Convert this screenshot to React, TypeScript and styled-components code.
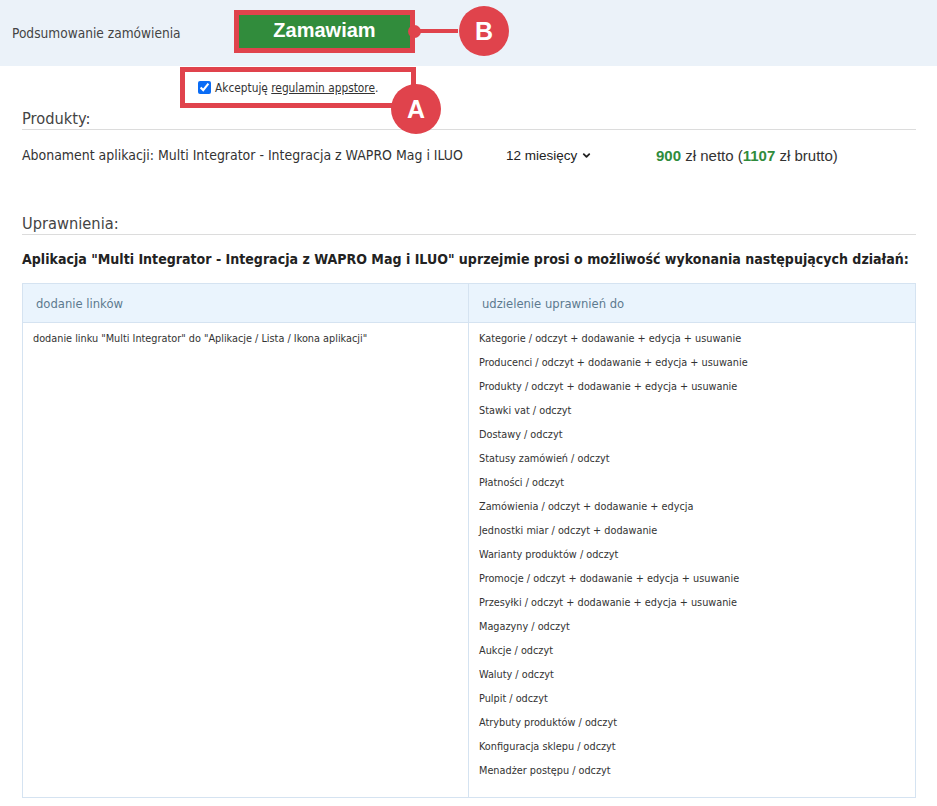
import React from "react";
import styled, { createGlobalStyle } from "styled-components";
import { ChevronDown } from "lucide-react";

const Global = createGlobalStyle`
  html, body { margin: 0; padding: 0; background: #fff; }
  body { font-family: "DejaVu Sans", Tahoma, sans-serif; color: #333; }
  * { box-sizing: border-box; }
`;

const RED = "#e0434c";
const COND = `"DejaVu Sans Condensed", "DejaVu Sans", sans-serif`;

const Page = styled.div`
  width: 937px;
  min-height: 806px;
  position: relative;
`;

const Header = styled.div`
  height: 66px;
  background: #ebf2f9;
  display: flex;
  align-items: center;
  padding-left: 12px;
`;

const HeaderTitle = styled.div`
  font-family: ${COND};
  font-size: 13.6px;
  color: #444;
  width: 222px;
  margin-top: -1px;
`;

const ButtonFrame = styled.div`
  position: relative;
  border: 5px solid ${RED};
  margin-top: -3px;
`;

const OrderButton = styled.button`
  width: 171px;
  height: 33px;
  border: none;
  background: #318c3c;
  color: #fff;
  font-family: "Liberation Sans", Arial, sans-serif;
  font-weight: bold;
  font-size: 20px;
  display: flex;
  align-items: center;
  justify-content: center;
  padding: 0 0 2px;
`;

const Dot = styled.span`
  position: absolute;
  width: 13px;
  height: 13px;
  border-radius: 50%;
  background: ${RED};
  right: -11px;
  top: 10px;
`;

const Connector = styled.span`
  position: absolute;
  height: 4px;
  width: 48px;
  background: ${RED};
  left: 100%;
  top: 14px;
`;

const Badge = styled.span<{ $x: number; $y: number }>`
  position: absolute;
  left: ${(p) => p.$x - 25}px;
  top: ${(p) => p.$y - 25}px;
  width: 50px;
  height: 50px;
  border-radius: 50%;
  background: ${RED};
  color: #fff;
  font-family: "Liberation Sans", Arial, sans-serif;
  font-weight: bold;
  font-size: 25px;
  display: flex;
  align-items: center;
  justify-content: center;
  z-index: 2;
`;

const AcceptRow = styled.div`
  padding-left: 180px;
  margin-top: 1px;
`;

const AcceptFrame = styled.label`
  width: 236px;
  height: 41px;
  border: 5px solid ${RED};
  display: flex;
  align-items: center;
  padding-left: 13px;
  gap: 4px;
  font-family: ${COND};
  font-size: 11.8px;
  color: #333;
  input {
    margin: 0;
    width: 13px;
    height: 13px;
    accent-color: #0a6cf5;
  }
  a {
    color: #333;
    text-decoration: underline;
  }
`;

const Content = styled.div`
  padding: 0 21px 0 22px;
`;

const SectionTitle = styled.div<{ $mt: number }>`
  font-family: ${COND};
  font-size: 16.3px;
  color: #444;
  padding-bottom: 1px;
  border-bottom: 1px solid #dcdcdc;
  margin-top: ${(p) => p.$mt}px;
`;

const ProductRow = styled.div`
  display: flex;
  align-items: center;
  height: 50px;
`;

const ProductName = styled.div`
  font-family: ${COND};
  font-size: 13.95px;
  color: #333;
  width: 484px;
`;

const Period = styled.div`
  font-family: "Liberation Sans", Arial, sans-serif;
  font-size: 13.5px;
  color: #222;
  width: 150px;
  display: flex;
  align-items: center;
  gap: 4px;
`;

const Price = styled.div`
  font-family: "Liberation Sans", Arial, sans-serif;
  font-size: 15px;
  color: #333;
  b { color: #2f8c3c; }
`;

const Lead = styled.div`
  font-family: ${COND};
  font-weight: bold;
  font-size: 14.05px;
  color: #222;
  margin-top: 16px;
  white-space: nowrap;
`;

const Table = styled.div`
  margin-top: 16px;
  border: 1px solid #d5e3f1;
  display: grid;
  grid-template-columns: 1fr 1fr;
`;

const HeadCell = styled.div<{ $last?: boolean }>`
  background: #eaf4fd;
  height: 39px;
  display: flex;
  align-items: center;
  padding-left: 13px;
  font-family: ${COND};
  font-size: 12.9px;
  color: #5d7a8f;
  border-bottom: 1px solid #d5e3f1;
  ${(p) => (p.$last ? "" : "border-right: 1px solid #d5e3f1;")}
`;

const BodyCell = styled.div<{ $last?: boolean }>`
  padding: 4px 10px 14px;
  font-family: ${COND};
  font-size: 10.8px;
  color: #333;
  line-height: 24px;
  ${(p) => (p.$last ? "" : "border-right: 1px solid #d5e3f1;")}
`;

const Line = styled.div``;

const perms = [
  "Kategorie / odczyt + dodawanie + edycja + usuwanie",
  "Producenci / odczyt + dodawanie + edycja + usuwanie",
  "Produkty / odczyt + dodawanie + edycja + usuwanie",
  "Stawki vat / odczyt",
  "Dostawy / odczyt",
  "Statusy zamówień / odczyt",
  "Płatności / odczyt",
  "Zamówienia / odczyt + dodawanie + edycja",
  "Jednostki miar / odczyt + dodawanie",
  "Warianty produktów / odczyt",
  "Promocje / odczyt + dodawanie + edycja + usuwanie",
  "Przesyłki / odczyt + dodawanie + edycja + usuwanie",
  "Magazyny / odczyt",
  "Aukcje / odczyt",
  "Waluty / odczyt",
  "Pulpit / odczyt",
  "Atrybuty produktów / odczyt",
  "Konfiguracja sklepu / odczyt",
  "Menadżer postępu / odczyt",
];

export default function App() {
  return (
    <Page>
      <Global />
      <Header>
        <HeaderTitle>Podsumowanie zamówienia</HeaderTitle>
        <ButtonFrame>
          <OrderButton>Zamawiam</OrderButton>
          <Dot />
          <Connector />
        </ButtonFrame>
      </Header>
      <Badge $x={484} $y={31}>B</Badge>
      <Badge $x={416} $y={109}>A</Badge>
      <AcceptRow>
        <AcceptFrame>
          <input type="checkbox" defaultChecked />
          <span>
            Akceptuję <a href="#">regulamin appstore</a>.
          </span>
        </AcceptFrame>
      </AcceptRow>
      <Content>
        <SectionTitle $mt={1}>Produkty:</SectionTitle>
        <ProductRow>
          <ProductName>Abonament aplikacji: Multi Integrator - Integracja z WAPRO Mag i ILUO</ProductName>
          <Period>
            12 miesięcy <ChevronDown size={11} strokeWidth={4} />
          </Period>
          <Price>
            <b>900</b> zł netto (<b>1107</b> zł brutto)
          </Price>
        </ProductRow>
        <SectionTitle $mt={34}>Uprawnienia:</SectionTitle>
        <Lead>
          Aplikacja "Multi Integrator - Integracja z WAPRO Mag i ILUO" uprzejmie prosi o możliwość wykonania następujących działań:
        </Lead>
        <Table>
          <HeadCell>dodanie linków</HeadCell>
          <HeadCell $last>udzielenie uprawnień do</HeadCell>
          <BodyCell>
            <Line>dodanie linku "Multi Integrator" do "Aplikacje / Lista / Ikona aplikacji"</Line>
          </BodyCell>
          <BodyCell $last>
            {perms.map((p) => (
              <Line key={p}>{p}</Line>
            ))}
          </BodyCell>
        </Table>
      </Content>
    </Page>
  );
}
